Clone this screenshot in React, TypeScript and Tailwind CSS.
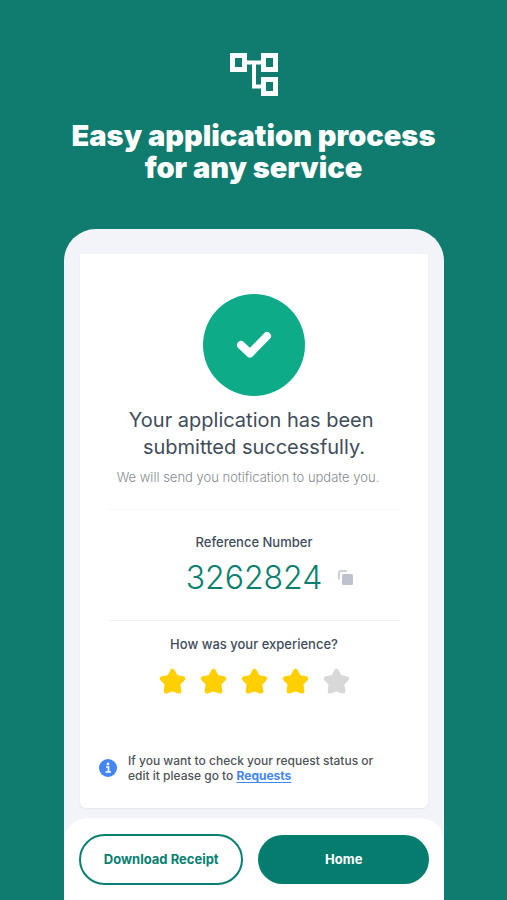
import { useState } from "react";

function FlowIcon() {
  return (
    <svg viewBox="0 0 48 44" className="h-11 w-12" fill="none" stroke="currentColor" aria-hidden="true">
      <g strokeWidth="5">
        <rect x="2.5" y="2.5" width="12" height="14" />
        <rect x="33.5" y="2.5" width="12" height="14" />
        <rect x="33.5" y="26.5" width="12" height="14" />
      </g>
      <path d="M16 9.5H32M24 9.5V33.5H32" strokeWidth="4" />
    </svg>
  );
}

function CheckIcon() {
  return (
    <svg viewBox="0 0 36 28" className="h-7 w-9" fill="none" stroke="currentColor" aria-hidden="true">
      <path d="M5 14L14 22.5L31 5" strokeWidth="8" strokeLinecap="round" strokeLinejoin="round" />
    </svg>
  );
}

function CopyIcon() {
  return (
    <svg viewBox="0 0 16 16" className="size-4" aria-hidden="true">
      <path d="M1 9.5V3A2 2 0 0 1 3 1H9" fill="none" stroke="#cdd0d9" strokeWidth="2" />
      <rect x="4" y="4" width="11" height="11" rx="1.5" fill="#bfc2ce" />
    </svg>
  );
}

function StarIcon({ filled }: { filled: boolean }) {
  return (
    <svg viewBox="0 0 26 26" className={filled ? "size-[27px] text-[#ffcf00]" : "size-[27px] text-[#d8d8d8]"} aria-hidden="true">
      <path
        d="M13 3L16.2 9L23 10.2L18.4 15.2L19.3 22.4L13 20.4L6.7 22.4L7.6 15.2L3 10.2L9.8 9Z"
        fill="currentColor"
        stroke="currentColor"
        strokeWidth="4.4"
        strokeLinejoin="round"
      />
    </svg>
  );
}

function InfoIcon() {
  return (
    <svg viewBox="0 0 18 18" className="size-[18px] shrink-0" aria-hidden="true">
      <circle cx="9" cy="9" r="9" fill="#4285f4" />
      <circle cx="9" cy="5" r="1.4" fill="#fff" />
      <path d="M7 8H9.5V13M6.5 13H12" fill="none" stroke="#fff" strokeWidth="1.7" />
    </svg>
  );
}

function Rating() {
  const [score, setScore] = useState(4);
  return (
    <fieldset className="mt-[15px]">
      <legend className="w-full text-center text-[13px] leading-4 font-medium text-[#3f4c5a]">
        How was your experience?
      </legend>
      <div className="mt-4 flex justify-center gap-[14px]">
        {[1, 2, 3, 4, 5].map((n) => (
          <label key={n} className="relative cursor-pointer">
            <input
              type="radio"
              name="rating"
              value={n}
              checked={score === n}
              onChange={() => setScore(n)}
              aria-label={`${n} of 5 stars`}
              className="sr-only"
            />
            <StarIcon filled={n <= score} />
          </label>
        ))}
      </div>
    </fieldset>
  );
}

export default function App() {
  return (
    <div className="flex min-h-screen flex-col bg-[#107c6f] font-[Inter,sans-serif]">
      <header className="flex flex-col items-center pt-[53px] text-white">
        <FlowIcon />
        <h1 className="mt-[23px] text-center text-[29px] leading-8 font-black">
          Easy application process
          <br />
          for any service
        </h1>
      </header>

      <main className="mr-[63px] ml-16 mt-[45px] flex grow flex-col overflow-hidden rounded-t-[32px] bg-[#f3f4f9]">
        <section className="mx-4 mt-[25px] rounded-b-md bg-white px-4 pt-10 pb-[25px] shadow-sm shadow-black/5">
          <div className="mx-auto flex size-[102px] items-center justify-center rounded-full bg-[#0dab87] text-white">
            <CheckIcon />
          </div>
          <h2 className="mt-[11px] text-center text-xl leading-[27px] text-[#3f4c5a]">
            Your application has been&nbsp;
            <br />
            submitted successfully.
          </h2>
          <p className="mt-2 pr-3 text-center text-[13px] leading-4 font-light text-[#858b90]">
            We will send you notification to update you.
          </p>
          <hr className="mx-3 mt-6 border-[#f8f8f8]" />

          <h3 className="mt-6 text-center text-[13px] leading-4 font-medium text-[#3f4c5a]">Reference Number</h3>
          <div className="mt-2 flex items-center justify-center gap-4 pl-8">
            <output className="text-[32px] leading-10 font-light text-[#087f70]">3262824</output>
            <button type="button" aria-label="Copy reference number">
              <CopyIcon />
            </button>
          </div>
          <hr className="mx-3 mt-[22px] border-[#f0f0f0]" />

          <Rating />

          <div className="mt-[58px] flex items-center gap-[11px] pl-[3px] text-[#4f5458]">
            <InfoIcon />
            <p className="text-xs leading-[15px] font-medium">
              If you want to check your request status or
              <br />
              edit it please go to{" "}
              <a href="#requests" className="font-bold text-[#4285f4] underline underline-offset-2">
                Requests
              </a>
            </p>
          </div>
        </section>

        <footer className="mt-[10px] grid grow grid-cols-[164fr_170fr] items-start gap-[15px] rounded-t-[24px] bg-white px-[15px] pt-4 pb-4">
          <button
            type="button"
            className="h-[51px] rounded-full border-2 border-[#087f70] text-[13px] font-bold text-[#087f70]"
          >
            Download Receipt
          </button>
          <button type="button" className="my-px h-[49px] rounded-full bg-[#047d6e] text-[13px] font-bold text-white">
            Home
          </button>
        </footer>
      </main>
    </div>
  );
}
